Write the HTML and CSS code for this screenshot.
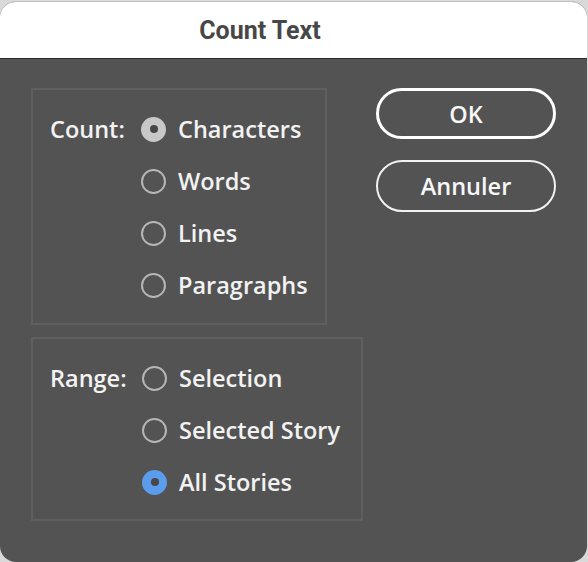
FILE: index.html
```html
<!DOCTYPE html>
<html>
<head>
<meta charset="utf-8">
<link rel="stylesheet" href="styles.css">
</head>
<body>
<div class="window">
  <div class="titlebar"><span class="title">Count Text</span></div>
  <div class="content">
    <div class="groups">
      <div class="group count-group">
        <div class="label">Count:</div>
        <div class="options">
          <div class="row"><span class="radio checked-gray"></span><span class="opt">Characters</span></div>
          <div class="row"><span class="radio"></span><span class="opt">Words</span></div>
          <div class="row"><span class="radio"></span><span class="opt">Lines</span></div>
          <div class="row"><span class="radio"></span><span class="opt">Paragraphs</span></div>
        </div>
      </div>
      <div class="group range-group">
        <div class="label">Range:</div>
        <div class="options">
          <div class="row"><span class="radio"></span><span class="opt">Selection</span></div>
          <div class="row"><span class="radio"></span><span class="opt">Selected Story</span></div>
          <div class="row"><span class="radio checked-blue"></span><span class="opt">All Stories</span></div>
        </div>
      </div>
    </div>
    <div class="buttons">
      <div class="btn btn-default">OK</div>
      <div class="btn">Annuler</div>
    </div>
  </div>
</div>
</body>
</html>
```

FILE: styles.css
```css
html, body {
  margin: 0;
  padding: 0;
  background: #d9d9d9;
}
.window {
  width: 587px;
  height: 561px;
  margin-top: 1px;
  border-radius: 16px;
  overflow: hidden;
  background: #535353;
  box-sizing: border-box;
  border-top: 1px solid #c4c4c4;
}
.titlebar {
  height: 56px;
  background: #ffffff;
  border-bottom: 1px solid #2c2c2c;
  display: flex;
  align-items: center;
  justify-content: center;
  padding-right: 67px;
}
.title {
  font-family: Roboto, "Liberation Sans", sans-serif;
  font-weight: 700;
  font-size: 25px;
  color: #474747;
}
.content {
  display: flex;
  padding: 29px 0 0 31px;
  font-family: "Open Sans", sans-serif;
  font-weight: 600;
  color: #f2f2f2;
}
.groups {
  display: flex;
  flex-direction: column;
  gap: 12px;
}
.group {
  border: 2px solid #5f5f5f;
  display: flex;
  align-items: flex-start;
  padding: 13px 17px 12px 17px;
}
.count-group { width: 258px; }
.range-group { width: 294px; padding-top: 13px; padding-bottom: 11px; }
.label {
  font-size: 23.5px;
  height: 52px;
  line-height: 52px;
}
.count-group .label { width: 91px; }
.range-group .label { width: 92px; }
.options {
  display: flex;
  flex-direction: column;
}
.row {
  height: 52px;
  display: flex;
  align-items: center;
  font-size: 23.5px;
}
.radio {
  width: 25px;
  height: 25px;
  box-sizing: border-box;
  border: 2px solid #b6b6b6;
  border-radius: 50%;
  margin-right: 12px;
  flex: none;
  position: relative;
}
.checked-gray {
  background: #c8c8c8;
  border-color: #c8c8c8;
}
.checked-blue {
  background: #5b9cec;
  border-color: #5b9cec;
}
.checked-gray::after, .checked-blue::after {
  content: "";
  position: absolute;
  left: 50%;
  top: 50%;
  width: 8px;
  height: 8px;
  margin: -4px 0 0 -4px;
  border-radius: 50%;
  background: #474747;
}
.buttons {
  margin-left: 13px;
  display: flex;
  flex-direction: column;
  gap: 21px;
}
.btn {
  width: 180px;
  height: 52px;
  box-sizing: border-box;
  border: 2px solid #f2f2f2;
  border-radius: 26px;
  display: flex;
  align-items: center;
  justify-content: center;
  font-size: 23.5px;
  color: #f7f7f7;
}
.btn-default {
  border: 3px solid #ffffff;
  height: 51px;
}
```
